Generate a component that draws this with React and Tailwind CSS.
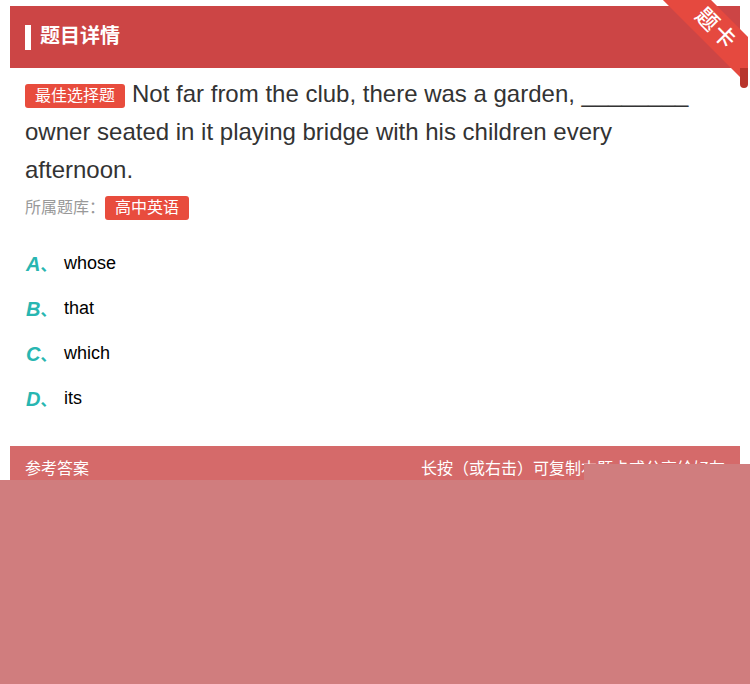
import React from "react";

const CN = { fontFamily: '"Liberation Sans", "Noto Sans CJK SC", sans-serif' };

const OPTIONS = [
  ["A", "whose"],
  ["B", "that"],
  ["C", "which"],
  ["D", "its"],
];

export default function App() {
  return (
    <div className="relative w-[750px] h-[684px] overflow-hidden bg-white" style={CN}>
      <div className="px-[10px] pt-[6px]">
        {/* header */}
        <div className="h-[62px] bg-[#cc4545] flex items-center pl-[15px]">
          <span className="w-[6px] h-[25px] bg-white mr-[9px]" />
          <span className="text-white text-[20px] font-bold leading-none mt-[-2px]">题目详情</span>
        </div>

        <div className="px-[15px]">
          <p className="mt-[7px] text-[24px] leading-[38px] text-[#333]">
            <span className="inline-block align-[1px] bg-[#e84c3d] text-white text-[16px] leading-[24px] px-[10px] rounded-[3px] mr-[7px]">
              最佳选择题
            </span>
            Not far from the club, there was a garden, ________ owner seated in it playing bridge with his children every afternoon.
          </p>
          <div className="mt-[7px] flex items-center text-[16px] text-[#999]">
            <span>所属题库：</span>
            <span className="bg-[#e84c3d] text-white leading-[24px] px-[10px] rounded-[3px]">高中英语</span>
          </div>

          <div className="mt-[21px] flex flex-col">
            {OPTIONS.map(([k, v]) => (
              <div key={k} className="h-[45px] flex items-center">
                <span className="w-[39px] pl-[1px] text-[#28b6b1] text-[20px] font-bold italic">
                  {k}
                  <span className="not-italic text-[16px]">、</span>
                </span>
                <span className="text-[18px] text-black">{v}</span>
              </div>
            ))}
          </div>
        </div>

        {/* answer bar */}
        <div className="mt-[25px] h-[44px] bg-[#d56a6a] flex items-start justify-between px-[15px] pt-[11px] text-white text-[16px]">
          <span>参考答案</span>
          <span>长按（或右击）可复制本题卡或分享给好友</span>
        </div>
      </div>

      {/* ribbon */}
      <div className="absolute top-0 right-[2px] w-[92px] h-[90px] overflow-hidden">
        <div className="absolute left-[-20px] top-[12px] w-[160px] h-[34px] bg-[#e5493f] rotate-45 flex items-center justify-center">
          <span className="text-white text-[22px] font-medium tracking-[2px] leading-none">题卡</span>
        </div>
        <div className="absolute right-0 top-[68px] w-[8px] h-[20px] bg-[#b8342c] rounded-b-[4px]" />
      </div>

      {/* locked overlay */}
      <div className="absolute left-[584px] top-[464px] right-0 h-[20px] bg-[#d07d7e]" />
      <div className="absolute left-0 right-0 top-[480px] bottom-0 bg-[#d07d7e]" />
    </div>
  );
}
